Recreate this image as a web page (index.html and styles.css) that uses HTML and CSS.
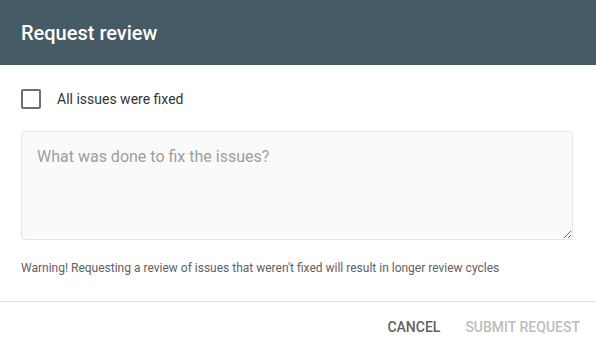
FILE: index.html
```html
<!DOCTYPE html>
<html>
<head>
<meta charset="utf-8">
<link rel="stylesheet" href="styles.css">
</head>
<body>
<div class="dialog">
  <header class="header"><h1 class="title">Request review</h1></header>
  <div class="body">
    <label class="check-row">
      <span class="checkbox"></span>
      <span class="check-label">All issues were fixed</span>
    </label>
    <textarea class="notes" placeholder="What was done to fix the issues?"></textarea>
    <p class="warning">Warning! Requesting a review of issues that weren't fixed will result in longer review cycles</p>
  </div>
  <footer class="footer">
    <button class="btn btn-cancel">CANCEL</button>
    <button class="btn btn-submit" disabled>SUBMIT REQUEST</button>
  </footer>
</div>
</body>
</html>
```

FILE: styles.css
```css
* { box-sizing: border-box; }
html, body { margin: 0; padding: 0; background: #fff; }
body { font-family: Roboto, "Noto Sans", sans-serif; width: 596px; height: 353px; overflow: hidden; }
.dialog { display: flex; flex-direction: column; width: 596px; }
.header { height: 65px; background: #455a64; display: flex; align-items: center; padding: 0 21px; }
.title { margin: 0; color: #fff; font-size: 20px; font-weight: 500; line-height: 24px; padding-top: 1px; }
.body { padding: 24px 23px 0 21px; display: flex; flex-direction: column; }
.check-row { display: flex; align-items: center; height: 20px; }
.checkbox { width: 20px; height: 20px; border: 2px solid #6f6f6f; border-radius: 2px; flex: none; }
.check-label { margin-left: 16px; font-size: 14px; color: #333; line-height: 20px; }
.notes { margin-top: 22px; width: 552px; height: 109px; background: #fafafa; border: 1px solid #e6e6e6; border-radius: 4px; padding: 15px 15px; font-family: Roboto, sans-serif; font-size: 16px; line-height: 20px; color: #212121; resize: vertical; outline: none; }
.notes::placeholder { color: #9e9e9e; }
.warning { margin: 20px 0 0; font-size: 12px; line-height: 16px; color: #616161; height: 16px; }
.footer { margin-top: 25px; border-top: 1px solid #e0e0e0; height: 51px; display: flex; justify-content: flex-end; align-items: center; padding: 0 16px 0 0; }
.btn { background: none; border: none; font-family: Roboto, sans-serif; font-size: 14px; font-weight: 500; padding: 0 0 0 25px; height: 36px; cursor: pointer; }
.btn-cancel { color: #616161; }
.btn-submit { color: #bdbdbd; }
```
